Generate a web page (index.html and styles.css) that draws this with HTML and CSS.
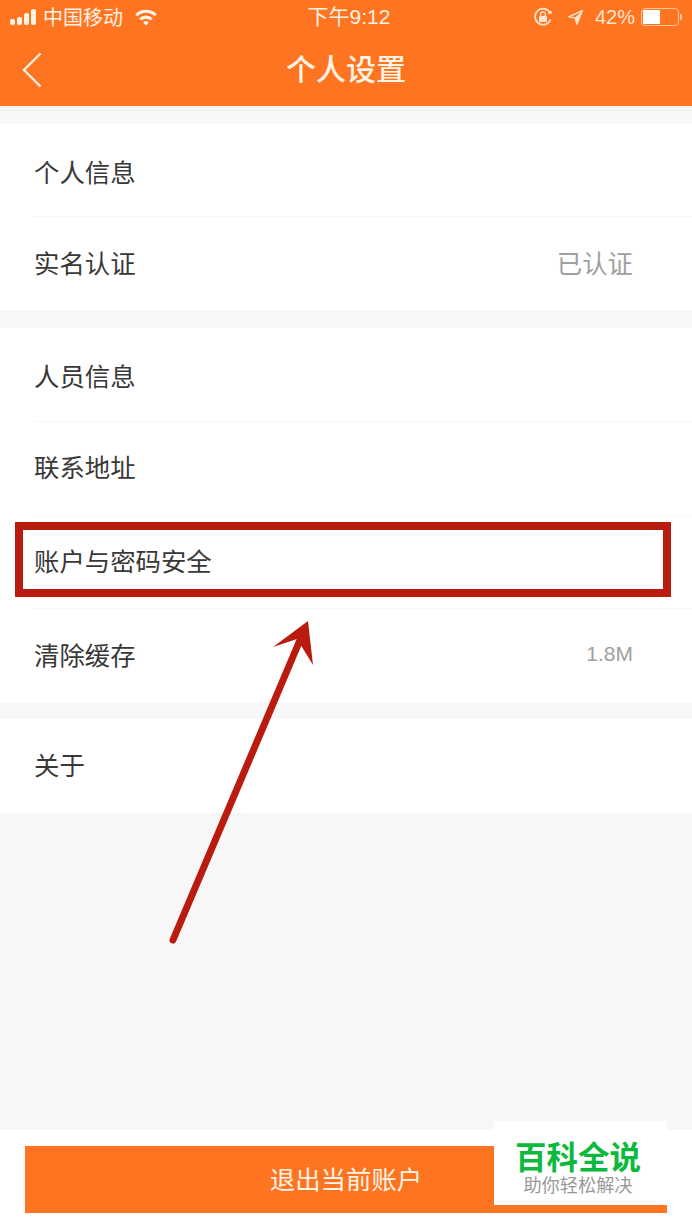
FILE: index.html
```html
<!DOCTYPE html>
<html lang="zh-CN">
<head>
    <meta charset="UTF-8">
    <meta name="viewport" content="width=device-width, initial-scale=1.0">
    <title>个人设置</title>
    <link rel="stylesheet" href="styles.css">
</head>
<body>
    <div class="app">
        <header class="top">
            <div class="status-bar">
                <div class="status-left">
                    <div class="signal">
                        <span class="bar"></span><span class="bar"></span><span class="bar"></span><span class="bar"></span>
                    </div>
                    <span class="carrier">中国移动</span>
                    <svg class="wifi" width="24" height="18" viewBox="0 0 24 18">
                        <path d="M1.2 6.2a15.4 15.4 0 0 1 21.6 0l-2.1 2.2a12.4 12.4 0 0 0-17.4 0z" fill="#fff3e6"/>
                        <path d="M5.2 10.3a9.8 9.8 0 0 1 13.6 0l-2.2 2.2a6.7 6.7 0 0 0-9.2 0z" fill="#fff3e6"/>
                        <path d="M9.2 14.4a4 4 0 0 1 5.6 0L12 17.4z" fill="#fff3e6"/>
                    </svg>
                </div>
                <span class="clock">下午9:12</span>
                <div class="status-right">
                    <svg class="lock" width="22" height="22" viewBox="0 0 22 22">
                        <path d="M18.6 13.5A8 8 0 1 1 18.2 7" fill="none" stroke="#ffe6cf" stroke-width="1.7"/>
                        <path d="M20.6 7.6l-4.6.3 2.6-3.6z" fill="#ffe6cf"/>
                        <rect x="7" y="10" width="8" height="6" rx="1" fill="#ffe6cf"/>
                        <path d="M8.6 10V8.4a2.4 2.4 0 0 1 4.8 0V10" fill="none" stroke="#ffe6cf" stroke-width="1.3"/>
                    </svg>
                    <svg class="location" width="17" height="17" viewBox="0 0 20 20">
                        <path d="M18 2L2 9.2l7.6 1.2L11.6 18z" fill="none" stroke="#ffe6cf" stroke-width="1.6" stroke-linejoin="round"/>
                        <path d="M18 2L9.6 10.4l2 7.6z" fill="#ffe6cf"/>
                    </svg>
                    <span class="percent">42%</span>
                    <div class="battery"><div class="battery-level"></div></div>
                </div>
            </div>
            <nav class="nav">
                <svg class="back" width="20" height="36" viewBox="0 0 20 36">
                    <path d="M18.5 1.5L2 18l16.5 16.5" fill="none" stroke="#ffeedd" stroke-width="2.4"/>
                </svg>
                <h1 class="title">个人设置</h1>
            </nav>
        </header>

        <main class="content">
            <section class="group">
                <div class="row"><span>个人信息</span></div>
                <div class="row"><span>实名认证</span><span class="row-value">已认证</span></div>
            </section>
            <section class="group group-main">
                <div class="row"><span>人员信息</span></div>
                <div class="row"><span>联系地址</span></div>
                <div class="row"><span>账户与密码安全</span></div>
                <div class="row"><span>清除缓存</span><span class="row-value row-size">1.8M</span></div>
            </section>
            <section class="group group-last">
                <div class="row"><span>关于</span></div>
            </section>
        </main>

        <footer class="bottom">
            <button class="logout" type="button">退出当前账户</button>
        </footer>

        <!-- annotations drawn over the screenshot -->
        <div class="highlight"></div>
        <svg class="arrow" width="692" height="1230" viewBox="0 0 692 1230">
            <path d="M173 940L300 640" fill="none" stroke="#b91c0e" stroke-width="7" stroke-linecap="round"/>
            <path d="M308 621L273 647L297 639L313 665z" fill="#b91c0e"/>
        </svg>
        <div class="watermark">
            <span class="watermark-name">百科全说</span>
            <span class="watermark-tag">助你轻松解决</span>
        </div>
    </div>
</body>
</html>
```

FILE: styles.css
```css
:root {
    --orange: #ff7421;
    --bg-color: #f7f7f7;
    --text-color: #383838;
    --subtle-text: #a0a0a0;
    --line-color: #f7f7f7;
    --mark-red: #b91c0e;
}

* { box-sizing: border-box; }

body {
    margin: 0;
    font-family: "Noto Sans CJK SC", "Liberation Sans", sans-serif;
}

.app {
    position: relative;
    width: 692px;
    height: 1230px;
    display: flex;
    flex-direction: column;
    background-color: var(--bg-color);
    overflow: hidden;
}

/* --- header --- */
.top {
    height: 106px;
    background-color: var(--orange);
    color: #fff3e6;
    flex-shrink: 0;
}

.status-bar {
    height: 35px;
    display: grid;
    grid-template-columns: 1fr auto 1fr;
    align-items: center;
    padding: 0 10px 1px;
}

.status-left, .status-right {
    display: flex;
    align-items: center;
}

.status-right { justify-content: flex-end; }

.signal {
    display: flex;
    align-items: flex-end;
    gap: 2px;
    width: 27px;
    height: 16px;
}
.bar {
    width: 5px;
    background-color: #fff3e6;
    border-radius: 2px;
}
.bar:nth-child(1) { height: 6px; }
.bar:nth-child(2) { height: 8px; }
.bar:nth-child(3) { height: 12px; }
.bar:nth-child(4) { height: 16px; }

.carrier {
    margin-left: 6px;
    font-size: 20px;
    line-height: 24px;
}

.wifi { margin-left: 11px; }

.clock {
    margin-left: 6px;
    font-family: "Liberation Sans", "Noto Sans CJK SC", sans-serif;
    font-size: 21px;
    line-height: 24px;
}

.lock { margin-right: 13px; }
.location { margin-right: 11px; }

.percent {
    font-family: "Liberation Sans", sans-serif;
    font-size: 20px;
    line-height: 24px;
    margin-right: 6px;
    color: #ffe6cf;
}

.battery {
    position: relative;
    width: 38px;
    height: 18px;
    border: 1px solid #ffc79c;
    border-radius: 4px;
    padding: 1px;
    margin-right: 3px;
}
.battery::after {
    content: '';
    position: absolute;
    right: -4px;
    top: 5px;
    width: 2px;
    height: 6px;
    background-color: #ffc79c;
    border-radius: 0 1px 1px 0;
}
.battery-level {
    width: 17px;
    height: 100%;
    background-color: #fff;
    border-radius: 1px;
}

.nav {
    height: 71px;
    display: flex;
    align-items: center;
    justify-content: center;
    position: relative;
    padding-bottom: 7px;
}

.back {
    position: absolute;
    left: 22px;
    top: 17px;
}

.title {
    margin: 0;
    font-size: 30px;
    font-weight: 500;
    line-height: 40px;
    color: #fff3e6;
}

/* --- list --- */
.content {
    flex: 1;
    padding-top: 18px;
}

.group { background-color: #ffffff; }
.group-main { margin-top: 18px; }
.group-last { margin-top: 16px; }

.row {
    height: 93px;
    margin-left: 34px;
    padding-right: 59px;
    padding-bottom: 4px;
    display: flex;
    align-items: center;
    justify-content: space-between;
    font-size: 25.4px;
    color: var(--text-color);
    border-bottom: 1px solid var(--line-color);
}
.row:first-child { padding-bottom: 0; padding-top: 2px; }
.group-main .row { height: 93.75px; }
.group-last .row { height: 94px; padding-top: 0; padding-bottom: 4px; }
.row:last-child { border-bottom: none; }

.row-value { color: var(--subtle-text); }
.row-size {
    font-family: "Liberation Sans", sans-serif;
    font-size: 21px;
}

/* --- footer --- */
.bottom {
    height: 100px;
    flex-shrink: 0;
    background-color: #ffffff;
    padding: 16px 25px 0;
}

.logout {
    display: block;
    width: 642px;
    height: 67px;
    padding: 0 0 4px;
    border: none;
    background-color: var(--orange);
    color: #fff3e6;
    font-family: inherit;
    font-size: 25.4px;
}

/* --- overlays --- */
.highlight {
    position: absolute;
    left: 15px;
    top: 522px;
    width: 656px;
    height: 75px;
    border: 8px solid var(--mark-red);
}

.arrow {
    position: absolute;
    left: 0;
    top: 0;
}

.watermark {
    position: absolute;
    left: 494px;
    top: 1121px;
    width: 173px;
    height: 84px;
    background-color: #ffffff;
    display: flex;
    flex-direction: column;
    align-items: center;
    padding: 16px 5px 0 0;
}
.watermark-name {
    font-size: 31.5px;
    line-height: 36px;
    font-weight: 700;
    color: #0cb93d;
}
.watermark-tag {
    font-size: 18.2px;
    line-height: 22px;
    color: #999999;
}
```
